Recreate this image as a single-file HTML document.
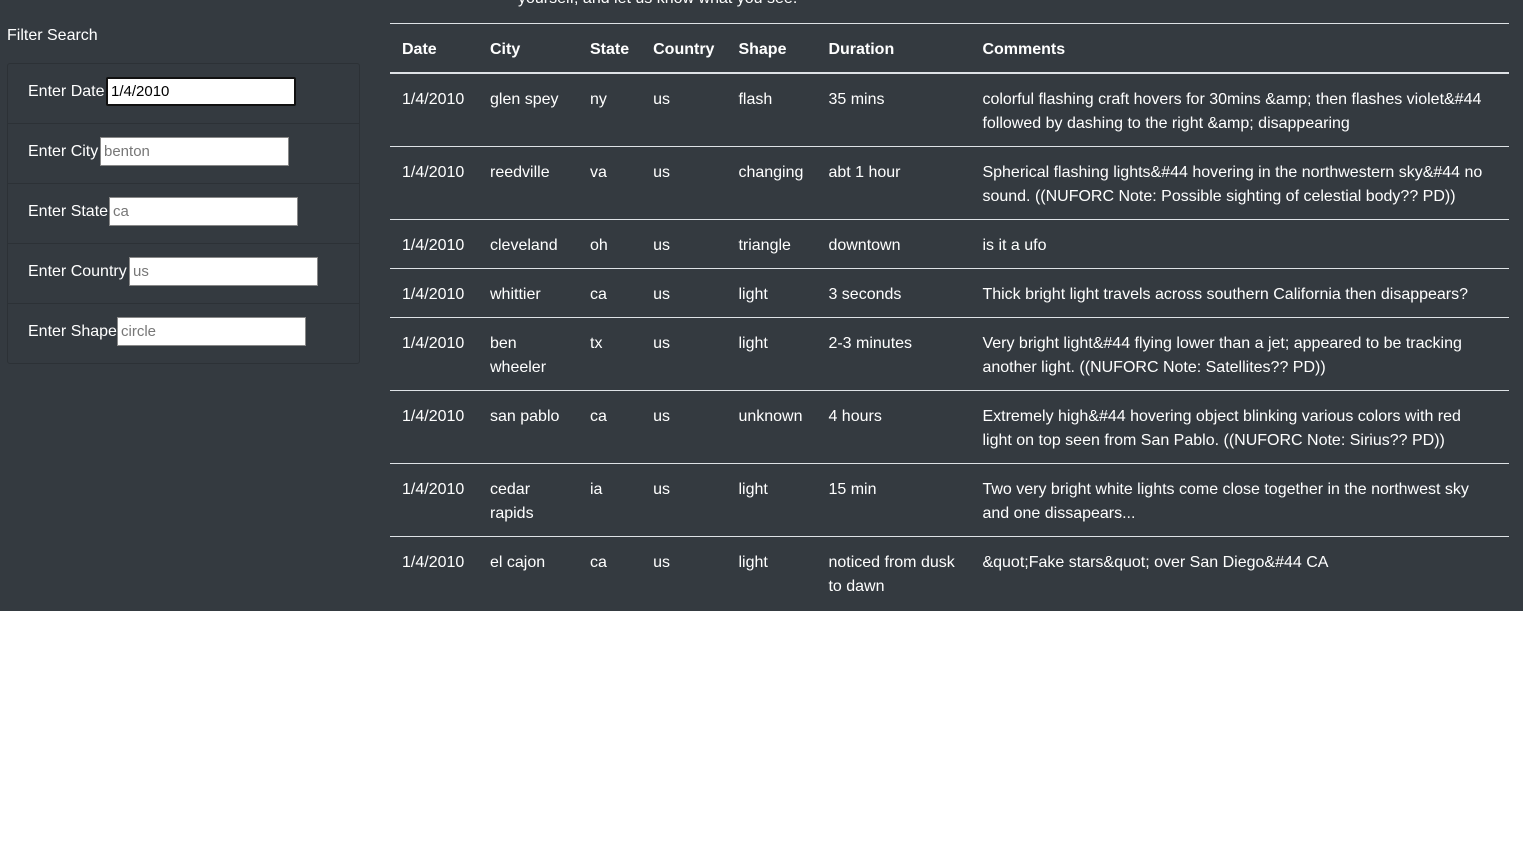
<!DOCTYPE html>
<html><head><style>
html,body{margin:0;padding:0;background:#fff;}
body{width:1536px;height:864px;position:relative;font-family:"Liberation Sans",sans-serif;font-size:16px;color:#fff;overflow:hidden}
#bg{position:absolute;left:0;top:0;width:1523px;height:611px;background:#343a40}
.abs{position:absolute;white-space:nowrap}
#panel{position:absolute;left:7px;top:63px;width:351px;height:299px;border:1px solid #2c3136;border-radius:3px}
.item{position:absolute;left:0;width:351px;height:60px;border-bottom:1px solid #2c3136;box-sizing:border-box}
.item span{position:absolute;left:20px;top:19px;font-size:16px}
.item input{position:absolute;top:13px;height:29px;box-sizing:border-box;border:1px solid #888;font:15px "Liberation Sans",sans-serif;color:#777;padding:0 3px;background:#fff}
table{position:absolute;left:390px;top:23px;width:1119px;border-collapse:collapse;border-top:1px solid #dee2e6}
th,td{text-align:left;vertical-align:top;padding:14px 12px 10px;line-height:24px;font-size:16px}
td:last-child{white-space:nowrap}
th{font-weight:bold;border-bottom:2px solid #dee2e6}
td{border-top:1px solid #dee2e6}
tr:first-child td{border-top:none}
</style></head><body>
<div id="bg"></div>
<div class="abs" style="left:518px;top:-10px">yourself, and let us know what you see.</div>
<div class="abs" style="left:7px;top:27px">Filter Search</div>
<div id="panel">
<div class="item" style="top:0"><span>Enter Date</span><input style="left:98px;width:190px;border:2px solid #111;border-radius:2px;color:#000" value="1/4/2010"></div>
<div class="item" style="top:60px"><span>Enter City</span><input style="left:92px;width:189px" value="benton"></div>
<div class="item" style="top:120px"><span>Enter State</span><input style="left:101px;width:189px" value="ca"></div>
<div class="item" style="top:180px"><span>Enter Country</span><input style="left:121px;width:189px" value="us"></div>
<div class="item" style="top:240px;border-bottom:none"><span>Enter Shape</span><input style="left:109px;width:189px" value="circle"></div>
</div>
<table>
<colgroup><col style="width:88px"><col style="width:100px"><col style="width:62px"><col style="width:85px"><col style="width:90px"><col style="width:154px"><col></colgroup>
<thead><tr><th>Date</th><th>City</th><th>State</th><th>Country</th><th>Shape</th><th>Duration</th><th>Comments</th></tr></thead>
<tbody>
<tr><td>1/4/2010</td><td>glen spey</td><td>ny</td><td>us</td><td>flash</td><td>35 mins</td><td>colorful flashing craft hovers for 30mins &amp;amp; then flashes violet&amp;#44<br>followed by dashing to the right &amp;amp; disappearing</td></tr>
<tr><td>1/4/2010</td><td>reedville</td><td>va</td><td>us</td><td>changing</td><td>abt 1 hour</td><td>Spherical flashing lights&amp;#44 hovering in the northwestern sky&amp;#44 no<br>sound. ((NUFORC Note: Possible sighting of celestial body?? PD))</td></tr>
<tr><td>1/4/2010</td><td>cleveland</td><td>oh</td><td>us</td><td>triangle</td><td>downtown</td><td>is it a ufo</td></tr>
<tr><td>1/4/2010</td><td>whittier</td><td>ca</td><td>us</td><td>light</td><td>3 seconds</td><td>Thick bright light travels across southern California then disappears?</td></tr>
<tr><td>1/4/2010</td><td>ben wheeler</td><td>tx</td><td>us</td><td>light</td><td>2-3 minutes</td><td>Very bright light&amp;#44 flying lower than a jet; appeared to be tracking<br>another light. ((NUFORC Note: Satellites?? PD))</td></tr>
<tr><td>1/4/2010</td><td>san pablo</td><td>ca</td><td>us</td><td>unknown</td><td>4 hours</td><td>Extremely high&amp;#44 hovering object blinking various colors with red<br>light on top seen from San Pablo. ((NUFORC Note: Sirius?? PD))</td></tr>
<tr><td>1/4/2010</td><td>cedar rapids</td><td>ia</td><td>us</td><td>light</td><td>15 min</td><td>Two very bright white lights come close together in the northwest sky<br>and one dissapears...</td></tr>
<tr><td>1/4/2010</td><td>el cajon</td><td>ca</td><td>us</td><td>light</td><td>noticed from dusk to dawn</td><td>&amp;quot;Fake stars&amp;quot; over San Diego&amp;#44 CA</td></tr>
</tbody></table>
</body></html>
